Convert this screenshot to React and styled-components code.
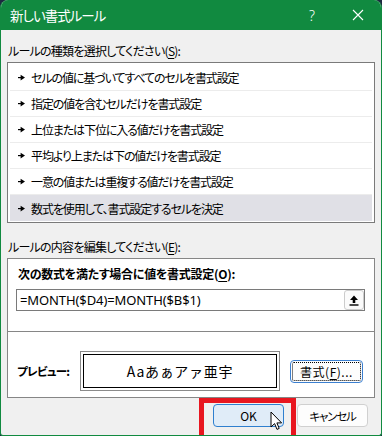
import React from 'react';
import styled, { createGlobalStyle } from 'styled-components';

const Global = createGlobalStyle`
  html, body { margin: 0; padding: 0; background: #1d2a40; }
  body {
    width: 382px; height: 436px; overflow: hidden;
    font-family: "Noto Sans CJK JP", "Noto Sans", sans-serif;
    font-feature-settings: "palt";
    -webkit-font-smoothing: antialiased;
  }
`;

const Window = styled.div`
  width: 382px;
  height: 436px;
  box-sizing: border-box;
  display: flex;
  flex-direction: column;
  background: #f0f0f0;
  border: 1px solid #118a40;
  border-top: none;
  border-radius: 8px 8px 3px 3px;
  overflow: hidden;
`;

const TitleBar = styled.div`
  height: 30px;
  flex: none;
  background: #118a40;
  display: flex;
  align-items: center;
  padding-left: 9px;
  color: #fff;
`;

const Title = styled.div`
  font-size: 13.5px;
  letter-spacing: -1px;
`;

const Controls = styled.div`
  margin-left: auto;
  display: flex;
  height: 100%;
`;

const CtrlButton = styled.div`
  width: 46px;
  height: 100%;
  display: flex;
  align-items: center;
  justify-content: center;
  font-family: "Noto Sans", sans-serif;
  font-size: 14px;
  font-weight: 300;
  color: #fff;
`;

const Content = styled.div`
  flex: 1;
  display: flex;
  flex-direction: column;
  padding: 12px 6px 0 6px;
`;

const SectionLabel = styled.div`
  font-size: 12px;
  letter-spacing: -0.75px;
  line-height: 18px;
  color: #000;
  padding-left: 1px;
  margin-top: ${p => p.$top || 0}px;
  u { text-underline-offset: 2px; }
`;

const ListBox = styled.div`
  margin-top: 2px;
  border: 1px solid #7a7a7a;
  background: #fff;
  padding: 2px 2px 1px 2px;
`;

const Row = styled.div`
  height: 26px;
  box-sizing: border-box;
  display: flex;
  align-items: center;
  gap: 6px;
  padding-left: 8px;
  font-size: 12px;
  letter-spacing: -1.1px;
  color: #000;
  background: ${p => (p.$selected ? '#e0e0e6' : '#fff')};
  border-bottom: ${p => (p.$last ? 'none' : '1px solid #ececec')};
`;

const GroupBox = styled.div`
  margin-top: 2px;
  border: 1px solid #868686;
  background: #fff;
`;

const TopArea = styled.div`
  padding: 6px 9px 20px 8px;
  border-bottom: 1px solid #868686;
  display: flex;
  flex-direction: column;
  gap: 6px;
`;

const BoldLabel = styled.div`
  font-size: 12px;
  letter-spacing: -0.28px;
  line-height: 18px;
  font-weight: bold;
  padding-left: 2px;
  color: #000;
  u { text-underline-offset: 2px; }
`;

const FormulaInput = styled.div`
  height: 22px;
  box-sizing: border-box;
  border: 1px solid #7a7a7a;
  display: flex;
  align-items: center;
  padding-left: 3px;
`;

const FormulaText = styled.div`
  font-family: "Noto Sans", sans-serif;
  font-size: 13px;
  letter-spacing: -0.1px;
  color: #000;
`;

const CollapseButton = styled.div`
  margin-left: auto;
  width: 20px;
  height: 20px;
  box-sizing: border-box;
  border: 1px solid #cccccc;
  border-radius: 3px;
  background: #fbfbfb;
  display: flex;
  align-items: center;
  justify-content: center;
`;

const BottomArea = styled.div`
  padding: 19px 10px 6px 9px;
  display: flex;
  align-items: center;
`;

const PreviewLabel = styled.div`
  width: 63px;
  font-size: 11.5px;
  letter-spacing: -0.7px;
  font-weight: bold;
  color: #000;
`;

const PreviewBox = styled.div`
  width: 200px;
  height: 40px;
  box-sizing: border-box;
  border: 1px solid #8a8a8a;
  padding: 2px;
  background: #fff;
`;

const PreviewInner = styled.div`
  height: 100%;
  box-sizing: border-box;
  border: 1px solid #000;
  display: flex;
  align-items: center;
  justify-content: center;
  font-size: 14px;
  font-feature-settings: normal;
  letter-spacing: 0.7px;
  color: #000;
`;

const DialogButton = styled.div`
  width: ${p => p.$w || 71}px;
  height: 23px;
  box-sizing: border-box;
  border-radius: 4px;
  display: flex;
  align-items: center;
  justify-content: center;
  font-size: ${p => p.$size || 12}px;
  letter-spacing: ${p => p.$ls || 0}px;
  color: #000;
  background: ${p => (p.$primary ? '#e0ecf8' : '#fdfdfd')};
  border: 1px solid ${p => (p.$primary ? '#2f7fcf' : p.$focus ? '#3b7fd0' : '#d0d0d0')};
  outline: ${p => (p.$focus ? '1px dotted #000' : 'none')};
  outline-offset: -3px;
  u { text-underline-offset: 2px; }
`;

const FormatButton = styled(DialogButton)`
  margin-left: 10px;
`;

const Footer = styled.div`
  display: flex;
  justify-content: flex-end;
  gap: 13px;
  margin-top: 6px;
  padding-right: 7px;
`;

const OkWrap = styled.div`
  position: relative;
`;

const Highlight = styled.div`
  position: absolute;
  left: -14px;
  right: -12px;
  top: -6px;
  bottom: -14px;
  border: 5px solid #e8161f;
  pointer-events: none;
`;

const Cursor = styled.svg`
  position: absolute;
  left: 57px;
  top: 7px;
`;

const Arrow = () => (
  <svg width="7" height="7" viewBox="0 0 7 7">
    <rect x="0" y="3" width="3" height="1.2" fill="#000" />
    <path d="M2.6 0.8 L7 3.6 L2.6 6.4 Z" fill="#000" />
  </svg>
);

const rules = [
  'セルの値に基づいてすべてのセルを書式設定',
  '指定の値を含むセルだけを書式設定',
  '上位または下位に入る値だけを書式設定',
  '平均より上または下の値だけを書式設定',
  '一意の値または重複する値だけを書式設定',
  '数式を使用して、書式設定するセルを決定',
];

export default function App() {
  return (
    <>
      <Global />
      <Window>
        <TitleBar>
          <Title>新しい書式ルール</Title>
          <Controls>
            <CtrlButton>?</CtrlButton>
            <CtrlButton>
              <svg width="12" height="12" viewBox="0 0 12 12">
                <path d="M1 1 L11 11 M11 1 L1 11" stroke="#fff" strokeWidth="1.1" />
              </svg>
            </CtrlButton>
          </Controls>
        </TitleBar>
        <Content>
          <SectionLabel>ルールの種類を選択してください(<u>S</u>):</SectionLabel>
          <ListBox>
            {rules.map((r, i) => (
              <Row key={i} $selected={i === rules.length - 1} $last={i === rules.length - 1}>
                <Arrow />
                <span>{r}</span>
              </Row>
            ))}
          </ListBox>
          <SectionLabel $top={15}>ルールの内容を編集してください(<u>E</u>):</SectionLabel>
          <GroupBox>
            <TopArea>
              <BoldLabel>次の数式を満たす場合に値を書式設定(<u>O</u>):</BoldLabel>
              <FormulaInput>
                <FormulaText>=MONTH($D4)=MONTH($B$1)</FormulaText>
                <CollapseButton>
                  <svg width="10" height="11" viewBox="0 0 10 11">
                    <path d="M5 0.5 L9 5 L6.3 5 L6.3 8 L3.7 8 L3.7 5 L1 5 Z" fill="#000" />
                    <rect x="0.5" y="9.3" width="9" height="1.4" fill="#000" />
                  </svg>
                </CollapseButton>
              </FormulaInput>
            </TopArea>
            <BottomArea>
              <PreviewLabel>プレビュー:</PreviewLabel>
              <PreviewBox>
                <PreviewInner>Aaあぁアァ亜宇</PreviewInner>
              </PreviewBox>
              <FormatButton $w={73} $focus $ls={0.5}>書式(<u>F</u>)...</FormatButton>
            </BottomArea>
          </GroupBox>
          <Footer>
            <OkWrap>
              <DialogButton $primary>OK</DialogButton>
              <Highlight />
              <Cursor width="13" height="20" viewBox="0 0 13 20">
                <path
                  d="M1 1 L1 16 L4.6 12.6 L7 18.4 L9.2 17.4 L6.9 11.9 L11.6 11.9 Z"
                  fill="#fff"
                  stroke="#000"
                  strokeWidth="1"
                  strokeLinejoin="round"
                />
              </Cursor>
            </OkWrap>
            <DialogButton $size={11.5} $ls={-1.2}>キャンセル</DialogButton>
          </Footer>
        </Content>
      </Window>
    </>
  );
}
